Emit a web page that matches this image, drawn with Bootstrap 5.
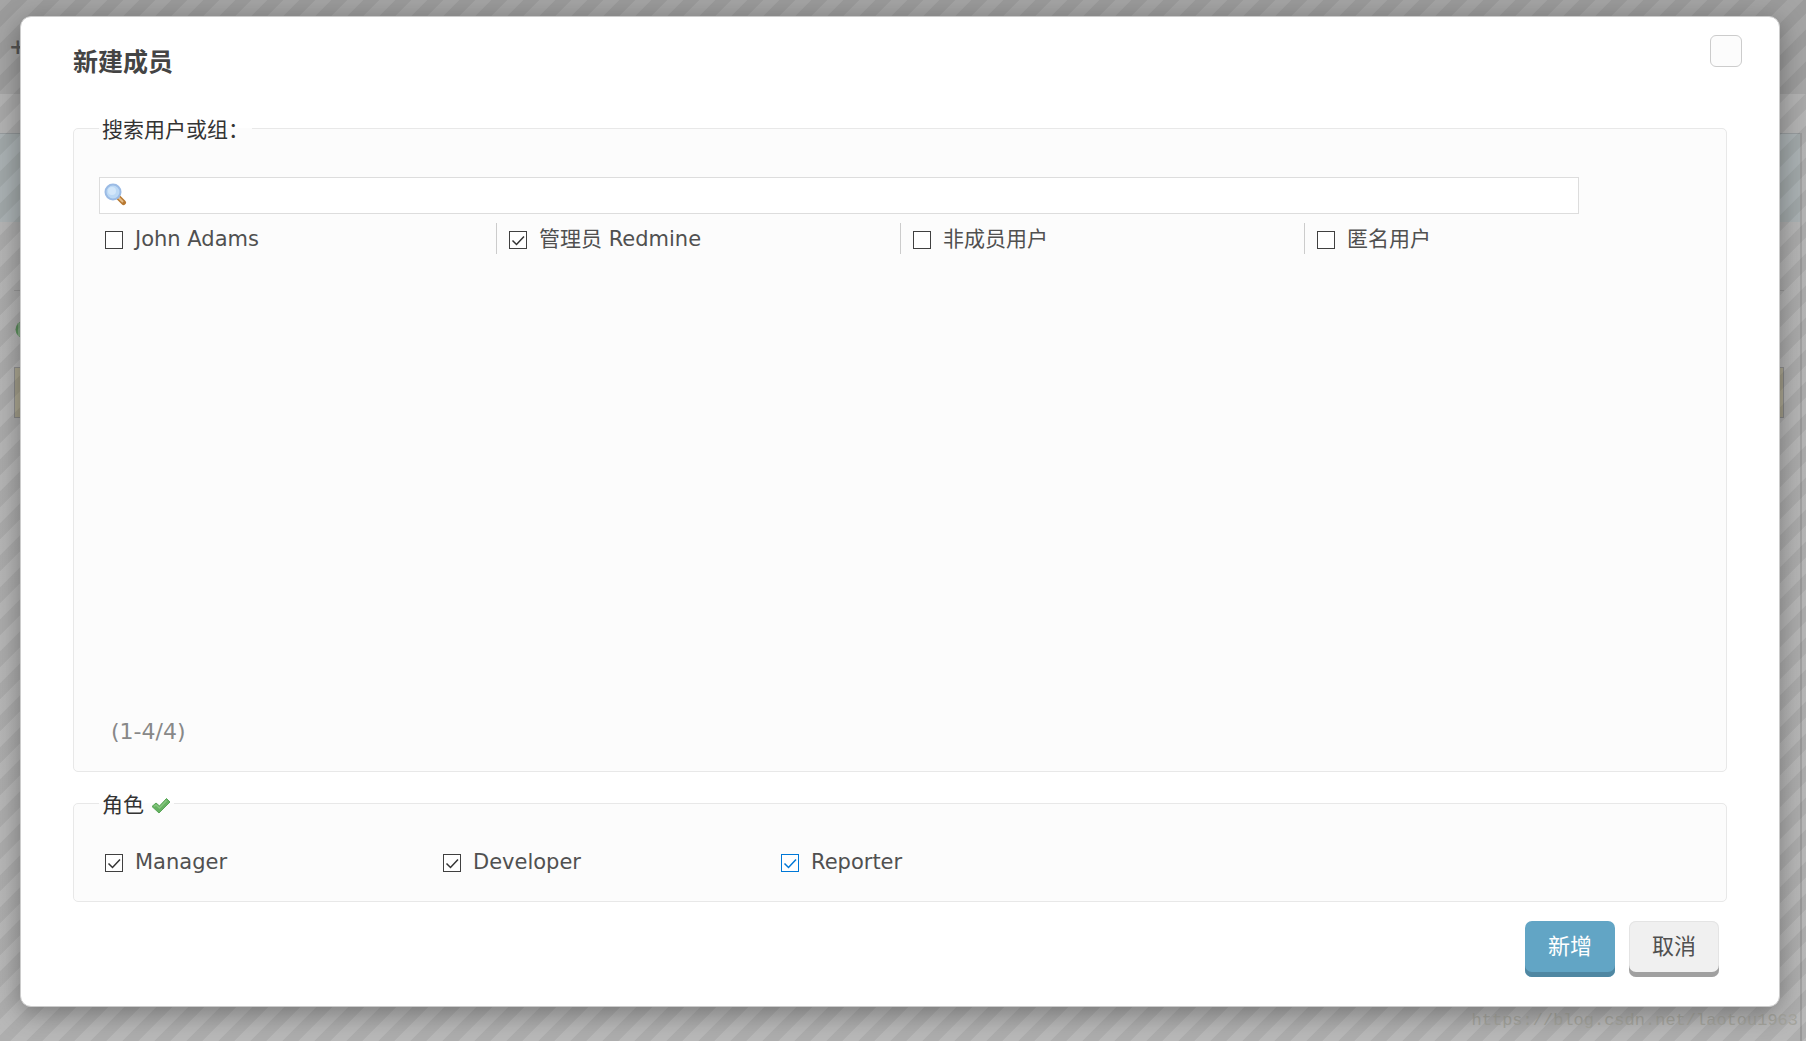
<!DOCTYPE html>
<html lang="zh-CN">
<head>
<meta charset="utf-8">
<meta name="viewport" content="width=device-width, initial-scale=1">
<title>新建成员</title>
<link href="https://cdn.jsdelivr.net/npm/bootstrap@5.3.0/dist/css/bootstrap.min.css" rel="stylesheet">
<style>
body{font-family:"DejaVu Sans","Noto Sans CJK SC",sans-serif;font-size:21px;line-height:30px;color:#505050;background:#b8b8b8;min-height:100vh}
/* dimmed page behind the dialog */
.page-back{position:absolute;inset:0;overflow:hidden;background:linear-gradient(#b4b4b4,#b9b9b9)}
.back-head{height:94px;background:#a5a5a5;padding:32px 0 0 9px;color:#555;font-weight:700}
.back-frame{margin-right:4px;border-right:2px solid #a2a2a2;height:100%}
.back-gap{height:39px;margin-right:-4px;background:#b3b3b3}
.back-bar{height:89px;background:#abb2b4;border-top:1px solid #989d9f}
.back-rule{margin:68px 16px 0 14px;border-top:1px solid #a0a0a0}
.back-icon{display:block;margin:29px 0 0 15px}
.back-note{margin:28px 16px 0 14px;height:51px;background:#ada893;border:1px solid #8f8f8f}
.stripes{position:absolute;inset:0;background:linear-gradient(135deg,transparent 17%,rgba(0,0,0,.06) 18% 42%,transparent 43% 67%,rgba(0,0,0,.06) 68% 92%,transparent 93%) 0 0/32px 32px}
.watermark{position:absolute;right:8px;bottom:8px;font:17px/24px "Liberation Mono",monospace;color:#a5a59e}
.member-dialog{position:relative;margin:16px 26px 34px 20px;padding:29px 52px 28px;min-height:calc(100vh - 50px);background:#fff;border:1px solid #ccc;border-radius:11px;box-shadow:0 6px 28px rgba(0,0,0,.35)}
.dialog-title{font-size:25px;line-height:34px;font-weight:700;color:#444}
.close-box{width:32px;height:32px;margin:-11px -15px 0 0;padding:0;background:#fcfcfc;border:1px solid #ccc;border-radius:6px}
.member-form{padding-top:7px}
.group-box{min-width:0;padding:0 25px;background:#fcfcfc;border:1px solid #e8e8e8;border-radius:5px}
.group-box>legend{float:none;width:auto;margin:0;padding:4px 3px 0;font-size:21px;line-height:30px;color:#333}
.user-box{margin-bottom:14px}
.search-wrap{width:92.4%;position:relative;margin-top:32px}
.search-wrap svg{position:absolute;left:5px;top:6px}
.search-input{display:block;width:100%;height:37px;border:1px solid #ddd;background:#fff;padding:0 8px 0 32px}
.user-list{display:grid;grid-template-columns:397fr 404fr 404fr 397fr;align-content:start;margin:9px 0 0;height:494px}
.user-cell{height:31px;padding-left:12px;border-left:1px solid #ccc}
.user-cell:first-child{padding-left:6px;border:0}
.role-list{padding:27px 0 24px}
.role-cell{width:338px;padding-left:6px}
.tick{appearance:none;flex:none;width:18px;height:18px;margin:2px 12px 0 0;border:1px solid #404040;background:#fff}
.tick:checked{background:#fff url("data:image/svg+xml,%3Csvg xmlns='http://www.w3.org/2000/svg' viewBox='0 0 16 16'%3E%3Cpath d='M2.5 8.5l4 4L14 4.5' fill='none' stroke='%23333' stroke-width='1.5'/%3E%3C/svg%3E")}
.tick.hot{border-color:#0078d7}
.tick.hot:checked{background-image:url("data:image/svg+xml,%3Csvg xmlns='http://www.w3.org/2000/svg' viewBox='0 0 16 16'%3E%3Cpath d='M2.5 8.5l4 4L14 4.5' fill='none' stroke='%230078d7' stroke-width='1.5'/%3E%3C/svg%3E")}
.pager{padding:0 0 24px 12px;font-size:22px;color:#888}
.actions{gap:14px;margin-top:19px}
.act{width:90px;height:56px;padding:0 0 5px;font-size:22px;line-height:30px;border:0;border-radius:7px}
.act-main{background:#62a5c5;color:#fff;box-shadow:inset 0 -5px #4f87a2}
.act-plain{background:#f0f0f0;color:#505050;box-shadow:inset 0 -5px #a0a0a0,inset 0 0 0 1px #e4e4e4}
</style>
</head>
<body class="position-relative">
<div class="page-back" aria-hidden="true">
  <div class="back-head">+</div>
  <div class="back-frame">
    <div class="back-gap"></div>
    <div class="back-bar"></div>
    <div class="back-rule"></div>
    <svg class="back-icon" width="19" height="19" viewBox="0 0 19 19"><circle cx="9.500" cy="9.500" r="9" fill="#5f9360"/><path d="M4 3v13" stroke="#85a885" stroke-width="2"/></svg>
    <div class="back-note"></div>
  </div>
  <div class="stripes"></div>
  <div class="watermark">https://blog.csdn.net/laotou1963</div>
</div>
<main class="member-dialog" role="dialog" aria-labelledby="dlg">
  <header class="d-flex justify-content-between align-items-start">
    <h1 class="dialog-title mb-0" id="dlg">新建成员</h1>
    <button class="close-box" type="button" aria-label="关闭"></button>
  </header>
  <form class="member-form mt-4">
    <fieldset class="group-box user-box">
      <legend>搜索用户或组：</legend>
      <div class="search-wrap">
        <input class="search-input" type="text" aria-label="搜索用户或组">
        <svg width="23" height="23" viewBox="0 0 23 23"><path d="M15 15l4.500 4.500" stroke="#b87932" stroke-width="5" stroke-linecap="round"/><path d="M14 14l5 5" stroke="#e5bd89" stroke-width="2"/><circle cx="9" cy="9" r="7.500" fill="#bcd9f5" stroke="#9bbbe5" stroke-width="2"/><circle cx="8" cy="8" r="4" fill="#d3e7fa"/></svg>
      </div>
      <div class="user-list">
        <label class="user-cell d-flex align-items-center"><input class="tick" type="checkbox">John Adams</label>
        <label class="user-cell d-flex align-items-center"><input class="tick" type="checkbox" checked>管理员 Redmine</label>
        <label class="user-cell d-flex align-items-center"><input class="tick" type="checkbox">非成员用户</label>
        <label class="user-cell d-flex align-items-center"><input class="tick" type="checkbox">匿名用户</label>
      </div>
      <div class="pager">(1-4/4)</div>
    </fieldset>
    <fieldset class="group-box">
      <legend>角色 <svg width="20" height="20" viewBox="0 0 20 20"><path d="M1 10.500l4-3.500 3.500 3L15.500 2.500l3.500 3.500L8 17z" fill="#66b262" stroke="#58a556" stroke-linejoin="round"/><path d="M3 10.500l2-1.500 3.500 3 7-7.500" fill="none" stroke="#86c77e" stroke-width="1.500"/></svg></legend>
      <div class="role-list d-flex">
        <label class="role-cell d-flex align-items-center"><input class="tick" type="checkbox" checked>Manager</label>
        <label class="role-cell d-flex align-items-center"><input class="tick" type="checkbox" checked>Developer</label>
        <label class="role-cell d-flex align-items-center"><input class="tick hot" type="checkbox" checked>Reporter</label>
      </div>
    </fieldset>
    <div class="actions d-flex justify-content-end pe-2">
      <button class="act act-main" type="button">新增</button>
      <button class="act act-plain" type="button">取消</button>
    </div>
  </form>
</main>
<script src="https://cdn.jsdelivr.net/npm/bootstrap@5.3.0/dist/js/bootstrap.bundle.min.js"></script>
</body>
</html>
